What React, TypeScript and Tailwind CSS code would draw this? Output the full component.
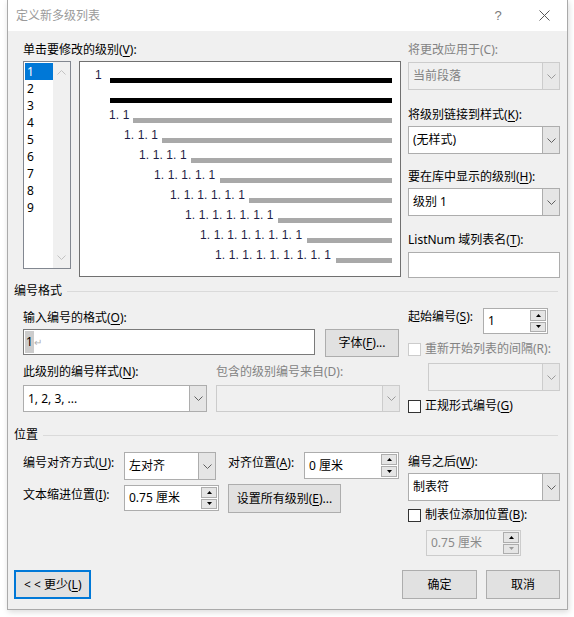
import clsx from 'clsx';
import type { ReactNode } from 'react';

const FONT = "font-['Noto_Sans','Noto_Sans_CJK_SC',sans-serif]";

const previewRows = [
  { label: '1', pad: 'pl-[15px]', w: 'w-[15px]', black: true },
  { label: '', pad: 'pl-[30px]', w: 'w-0', black: true },
  { label: '1. 1', pad: 'pl-[29px]', w: 'w-[24px]' },
  { label: '1. 1. 1', pad: 'pl-[44px]', w: 'w-[38px]' },
  { label: '1. 1. 1. 1', pad: 'pl-[59px]', w: 'w-[52px]' },
  { label: '1. 1. 1. 1. 1', pad: 'pl-[74px]', w: 'w-[66px]' },
  { label: '1. 1. 1. 1. 1. 1', pad: 'pl-[90px]', w: 'w-[79px]' },
  { label: '1. 1. 1. 1. 1. 1. 1', pad: 'pl-[105px]', w: 'w-[93px]' },
  { label: '1. 1. 1. 1. 1. 1. 1. 1', pad: 'pl-[120px]', w: 'w-[107px]' },
  { label: '1. 1. 1. 1. 1. 1. 1. 1. 1', pad: 'pl-[135px]', w: 'w-[121px]' },
];

function Key({ k }: { k: string }) {
  return <u className="underline underline-offset-[2px]">{k}</u>;
}

function Label({ children, className }: { children: ReactNode; className?: string }) {
  return <div className={clsx('h-[16px] leading-[16px] whitespace-nowrap shrink-0', className)}>{children}</div>;
}

function Chevron({ up, className = 'stroke-[#606060]' }: { up?: boolean; className?: string }) {
  return (
    <svg width="9" height="5" viewBox="0 0 9 5" className={className}>
      <polyline points={up ? '0.5,4.5 4.5,0.5 8.5,4.5' : '0.5,0.5 4.5,4.5 8.5,0.5'} fill="none" strokeWidth="1" />
    </svg>
  );
}

function Tri({ up, className = 'fill-black' }: { up?: boolean; className?: string }) {
  return (
    <svg width="5" height="3" viewBox="0 0 5 3" className={className}>
      <polygon points={up ? '0,3 2.5,0 5,3' : '0,0 5,0 2.5,3'} />
    </svg>
  );
}

function Combo({ value, className, disabled }: { value: string; className?: string; disabled?: boolean }) {
  return (
    <div
      className={clsx(
        'flex border shrink-0',
        disabled ? 'border-[#cccccc] bg-[#f0f0f0] text-[#838383]' : 'border-[#adadad] bg-white text-black',
        className,
      )}
    >
      <div className="flex-1 flex items-center pl-[4px] whitespace-nowrap">{value}</div>
      <div
        className={clsx(
          'w-[17px] flex items-center justify-center border-l',
          disabled ? 'border-[#cccccc] bg-[#e8e8e8]' : 'border-[#adadad] bg-[#e5e5e5]',
        )}
      >
        <Chevron className={disabled ? 'stroke-[#9a9a9a]' : 'stroke-[#606060]'} />
      </div>
    </div>
  );
}

function Spin({ value, className, disabled }: { value: string; className?: string; disabled?: boolean }) {
  return (
    <div
      className={clsx(
        'flex border shrink-0',
        disabled ? 'border-[#cccccc] bg-[#f0f0f0] text-[#8a8a8a]' : 'border-[#adadad] bg-white text-black',
        className,
      )}
    >
      <div className="flex-1 flex items-center pl-[4px] whitespace-nowrap">{value}</div>
      <div className="w-[17px] flex flex-col gap-px py-px pr-px">
        <div className="flex-1 flex items-center justify-center border border-[#adadad] bg-[#e5e5e5]">
          <Tri up />
        </div>
        <div className="flex-1 flex items-center justify-center border border-[#adadad] bg-[#e5e5e5]">
          <Tri className={disabled ? 'fill-[#9a9a9a]' : 'fill-black'} />
        </div>
      </div>
    </div>
  );
}

function Check({ disabled }: { disabled?: boolean }) {
  return (
    <div
      className={clsx('w-[13px] h-[13px] shrink-0 border bg-white', disabled ? 'border-[#cccccc]' : 'border-[#333333]')}
    />
  );
}

function Btn({ children, className }: { children: ReactNode; className?: string }) {
  return (
    <div className={clsx('flex items-center justify-center shrink-0 border border-[#adadad] bg-[#e1e1e1]', className)}>
      {children}
    </div>
  );
}

function Group({ title, className }: { title: string; className?: string }) {
  return (
    <div className={clsx('h-[16px] flex items-center pl-[6px] pr-[9px]', className)}>
      <span className="leading-[16px]">{title}</span>
      <div className="ml-[5px] flex-1 h-px bg-[#dadada]" />
    </div>
  );
}

export default function App() {
  return (
    <div className={clsx('w-[574px] h-[617px] bg-white text-[12px] leading-[16px] text-black', FONT)}>
      <div className="ml-[7px] w-[561px] h-[610px] flex flex-col border-x border-b border-[#aaaaaa] bg-[#f0f0f0] shadow-[1px_2px_6px_rgba(0,0,0,0.15)]">
        {/* title bar */}
        <div className="h-[31px] shrink-0 flex items-center bg-white">
          <div className="pl-[8px] text-[#9a9a9a]">定义新多级列表</div>
          <div className="ml-auto w-[46px] flex justify-center text-[13px] text-[#7a7a7a] font-['Liberation_Sans',sans-serif]">
            ?
          </div>
          <div className="w-[46px] flex justify-center">
            <svg width="11" height="11" viewBox="0 0 11 11" className="stroke-[#5a5a5a]">
              <line x1="0.5" y1="0.5" x2="10.5" y2="10.5" strokeWidth="1" />
              <line x1="10.5" y1="0.5" x2="0.5" y2="10.5" strokeWidth="1" />
            </svg>
          </div>
        </div>

        {/* levels + preview */}
        <div className="flex pl-[15px] pt-[11px]">
          <div className="w-[378px] flex flex-col">
            <Label>
              单击要修改的级别(<Key k="V" />):
            </Label>
            <div className="mt-[3px] flex gap-[8px] items-start">
              <div className="w-[48px] h-[208px] shrink-0 flex border border-[#828790] bg-white">
                <div className="flex-1 flex flex-col pl-px pt-px">
                  {[1, 2, 3, 4, 5, 6, 7, 8, 9].map((n) => (
                    <div
                      key={n}
                      className={clsx('h-[17px] leading-[17px] pl-[2px]', n === 1 && 'bg-[#0078d7] text-white')}
                    >
                      {n}
                    </div>
                  ))}
                </div>
                <div className="w-[17px] flex flex-col items-center justify-between py-[8px] bg-[#f0f0f0]">
                  <Chevron up className="stroke-[#c2c2c2]" />
                  <Chevron className="stroke-[#c2c2c2]" />
                </div>
              </div>
              <div className="w-[322px] h-[216px] shrink-0 border border-[#707070] bg-white pt-[7px] pr-[8px] font-['Liberation_Sans',sans-serif] text-[#1e1e46]">
                {previewRows.map((r, i) => (
                  <div key={i} className={clsx('flex h-[20px]', r.pad)}>
                    <span className={clsx('shrink-0 whitespace-nowrap text-[12px] leading-[12px] tracking-[0.1px]', r.w)}>
                      {r.label}
                    </span>
                    <div className={clsx('flex-1 mt-[9px] h-[5px]', r.black ? 'bg-black' : 'bg-[#a9a9a9]')} />
                  </div>
                ))}
              </div>
            </div>
          </div>
          <div className="ml-[7px] w-[152px] flex flex-col">
            <Label className="text-[#838383]">将更改应用于(C):</Label>
            <Combo disabled value="当前段落" className="mt-[4px] h-[28px]" />
            <Label className="mt-[17px]">
              将级别链接到样式(<Key k="K" />):
            </Label>
            <Combo value="(无样式)" className="mt-[3px] h-[28px]" />
            <Label className="mt-[15px]">
              要在库中显示的级别(<Key k="H" />):
            </Label>
            <Combo value="级别 1" className="mt-[3px] h-[28px]" />
            <Label className="mt-[16px]">
              ListNum 域列表名(<Key k="T" />):
            </Label>
            <div className="mt-[4px] h-[26px] border border-[#adadad] bg-white" />
          </div>
        </div>

        <Group title="编号格式" className="mt-[5px]" />

        {/* number format */}
        <div className="flex pl-[15px]">
          <div className="w-[378px] flex flex-col">
            <Label className="mt-[11px]">
              输入编号的格式(<Key k="O" />):
            </Label>
            <div className="mt-[3px] flex items-start">
              <div className="w-[292px] h-[26px] shrink-0 flex items-stretch p-px border border-[#7a7a7a] bg-white">
                <span className="flex items-center px-px bg-[#cccccc]">1</span>
                <span className="flex items-center text-[10px] text-[#b0b0b0]">↵</span>
              </div>
              <Btn className="ml-[10px] w-[74px] h-[28px]">
                字体(<Key k="F" />)...
              </Btn>
            </div>
            <div className="mt-[7px] flex">
              <Label className="w-[193px]">
                此级别的编号样式(<Key k="N" />):
              </Label>
              <Label className="text-[#838383]">包含的级别编号来自(D):</Label>
            </div>
            <div className="mt-[5px] flex gap-[9px]">
              <Combo value="1, 2, 3, ..." className="w-[184px] h-[27px]" />
              <Combo disabled value="" className="w-[184px] h-[27px]" />
            </div>
          </div>
          <div className="ml-[7px] w-[152px] flex flex-col">
            <div className="mt-[9px] flex items-start">
              <Label className="mt-px w-[75px]">
                起始编号(<Key k="S" />):
              </Label>
              <Spin value="1" className="w-[65px] h-[26px]" />
            </div>
            <div className="mt-[7px] h-[16px] flex items-center gap-[4px]">
              <Check disabled />
              <span className="whitespace-nowrap text-[#838383]">重新开始列表的间隔(R):</span>
            </div>
            <Combo disabled value="" className="mt-[6px] ml-[20px] w-[132px] h-[28px]" />
            <div className="mt-[7px] h-[16px] flex items-center gap-[4px]">
              <Check />
              <span className="whitespace-nowrap">
                正规形式编号(<Key k="G" />)
              </span>
            </div>
          </div>
        </div>

        <Group title="位置" className="mt-[13px]" />

        {/* position */}
        <div className="flex pl-[15px]">
          <div className="w-[378px] flex flex-col">
            <div className="mt-[9px] flex items-start">
              <Label className="mt-[3px] w-[101px]">
                编号对齐方式(<Key k="U" />):
              </Label>
              <Combo value="左对齐" className="w-[92px] h-[28px]" />
              <Label className="ml-[12px] mt-[3px] w-[76px]">
                对齐位置(<Key k="A" />):
              </Label>
              <Spin value="0 厘米" className="w-[95px] h-[27px]" />
            </div>
            <div className="mt-[4px] flex items-start">
              <Label className="mt-[3px] w-[101px]">
                文本缩进位置(<Key k="I" />):
              </Label>
              <Spin value="0.75 厘米" className="mt-px w-[95px] h-[26px]" />
              <Btn className="ml-[9px] w-[113px] h-[29px]">
                设置所有级别(<Key k="E" />)...
              </Btn>
            </div>
          </div>
          <div className="ml-[7px] w-[152px] flex flex-col">
            <Label className="mt-[11px]">
              编号之后(<Key k="W" />):
            </Label>
            <Combo value="制表符" className="mt-[3px] h-[28px]" />
            <div className="mt-[6px] h-[16px] flex items-center gap-[4px]">
              <Check />
              <span className="whitespace-nowrap">
                制表位添加位置(<Key k="B" />):
              </span>
            </div>
            <Spin disabled value="0.75 厘米" className="mt-[7px] ml-[18px] w-[95px] h-[26px]" />
          </div>
        </div>

        {/* buttons */}
        <div className="mt-[14px] flex pl-[6px] pr-[7px]">
          <div className="w-[77px] h-[29px] shrink-0 flex items-center pl-[8px] border-2 border-[#0078d7] bg-[#e1e1e1] whitespace-nowrap">
            &lt; &lt; 更少(<Key k="L" />)
          </div>
          <Btn className="ml-auto w-[75px] h-[29px]">确定</Btn>
          <Btn className="ml-[9px] w-[74px] h-[29px]">取消</Btn>
        </div>
      </div>
    </div>
  );
}
